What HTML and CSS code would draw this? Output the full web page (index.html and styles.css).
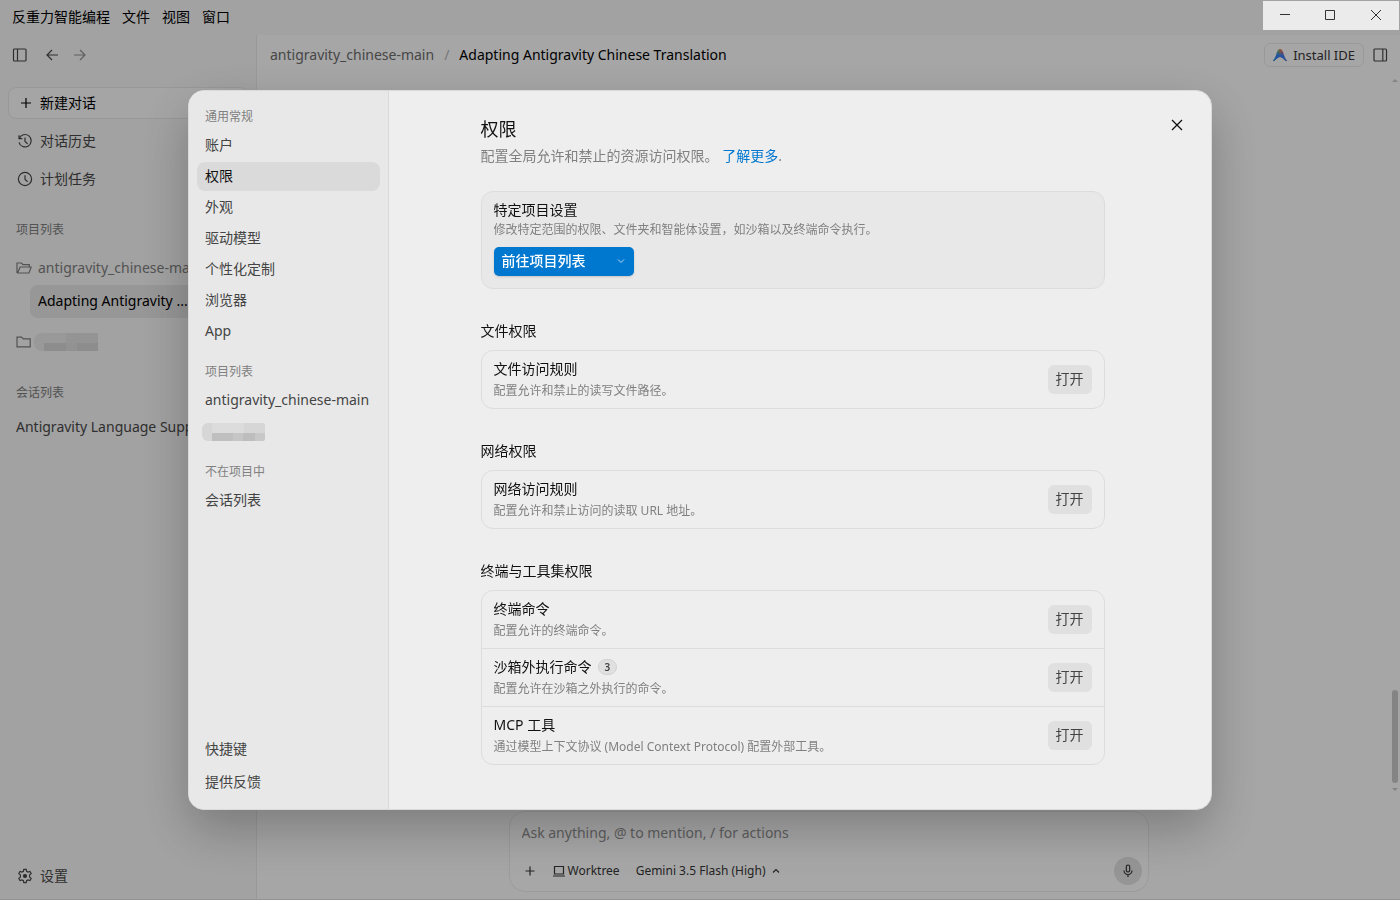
FILE: index.html
```html
<!DOCTYPE html>
<html lang="zh-CN">
<head>
    <meta charset="UTF-8">
    <meta name="viewport" content="width=device-width, initial-scale=1.0">
    <title>反重力智能编程</title>
    <link rel="stylesheet" href="styles.css">
</head>
<body>
    <div class="app">
        <header class="titlebar">
            <nav class="menu">
                <button type="button">反重力智能编程</button>
                <button type="button">文件</button>
                <button type="button">视图</button>
                <button type="button">窗口</button>
            </nav>
            <div class="window-controls">
                <button type="button" aria-label="最小化">
                    <svg width="12" height="12" viewBox="0 0 12 12"><path d="M1 4.5h10"/></svg>
                </button>
                <button type="button" aria-label="最大化">
                    <svg width="12" height="12" viewBox="0 0 12 12"><path d="M1.5 .5h9v9h-9z"/></svg>
                </button>
                <button type="button" aria-label="关闭">
                    <svg width="12" height="12" viewBox="0 0 12 12"><path d="M1 0l10 10M11 0L1 10"/></svg>
                </button>
            </div>
        </header>

        <div class="workspace">
            <aside class="sidebar">
                <div class="sidebar-tools">
                    <button type="button" aria-label="切换侧边栏">
                        <svg class="icon" width="16" height="16" viewBox="0 0 16 16"><rect x="1.5" y="2" width="12.5" height="12" rx="1"/><path d="M5.5 2v12"/></svg>
                    </button>
                    <button type="button" aria-label="后退">
                        <svg class="icon" width="16" height="16" viewBox="0 0 16 16"><path d="M14 8H3M8 3L3 8l5 5"/></svg>
                    </button>
                    <button type="button" class="faded" aria-label="前进">
                        <svg class="icon" width="16" height="16" viewBox="0 0 16 16"><path d="M2 8h11M8 3l5 5-5 5"/></svg>
                    </button>
                </div>

                <button type="button" class="new-chat">
                    <svg class="icon" width="16" height="16" viewBox="0 0 16 16"><path d="M8 3v10M3 8h10"/></svg>
                    <span>新建对话</span>
                </button>
                <button type="button" class="side-link">
                    <svg class="icon" width="16" height="16" viewBox="0 0 16 16"><path d="M2 2.3v3.4h3.4M2.2 5.5A6.2 6.2 0 1 1 2 9.3M8 4.6v3.8l2.6 2.4"/></svg>
                    <span>对话历史</span>
                </button>
                <button type="button" class="side-link">
                    <svg class="icon" width="16" height="16" viewBox="0 0 16 16"><circle cx="8" cy="8" r="6.6"/><path d="M8 4.2v4l2.6 2.6"/></svg>
                    <span>计划任务</span>
                </button>

                <h2 class="side-title">项目列表</h2>
                <div class="project">
                    <svg class="icon" width="16" height="16" viewBox="0 0 16 16"><path d="M1 13V3h4.4l1.6 1.7h6.3V7M1 13h12l2.2-6H4.2L1.6 12.8"/></svg>
                    <span>antigravity_chinese-main</span>
                </div>
                <a href="#" class="conversation active">Adapting Antigravity ...</a>
                <div class="project second">
                    <svg class="icon" width="16" height="16" viewBox="0 0 16 16"><path d="M1 12.8V3.2h4.6l1.6 1.6h7v8z"/></svg>
                    <span class="mosaic dark"></span>
                </div>

                <h2 class="side-title chats">会话列表</h2>
                <a href="#" class="conversation-link">Antigravity Language Support</a>

                <button type="button" class="side-link settings">
                    <svg class="icon" width="16" height="16" viewBox="0 0 16 16"><path d="M6.8 1.3h2.4l.4 2 1.4.8 2-.7 1.2 2.1-1.6 1.4v2.2l1.6 1.4-1.2 2.1-2-.7-1.4.8-.4 2H6.8l-.4-2-1.4-.8-2 .7-1.2-2.1 1.6-1.4V6.9L1.8 5.500 3 3.400l2 .7 1.400-.8z"/><circle cx="8" cy="8" r="1.500" fill="currentColor"/></svg>
                    <span>设置</span>
                </button>
            </aside>

            <main class="main">
                <div class="main-header">
                    <div class="breadcrumb">
                        <a href="#">antigravity_chinese-main</a>
                        <span class="slash">/</span>
                        <span class="current">Adapting Antigravity Chinese Translation</span>
                    </div>
                    <div class="header-actions">
                        <button type="button" class="install">
                            <svg width="16" height="16" viewBox="0 0 16 16">
                                <defs>
                                    <linearGradient id="peak" x1="0" y1="0" x2="1" y2="0">
                                        <stop offset="0.3" stop-color="#4fae6a"/>
                                        <stop offset="0.5" stop-color="#c98a4a"/>
                                        <stop offset="0.65" stop-color="#e0584c"/>
                                    </linearGradient>
                                    <linearGradient id="slope" x1="0" y1="0" x2="0" y2="1">
                                        <stop offset="0.1" stop-color="#3678ea" stop-opacity="0"/>
                                        <stop offset="0.55" stop-color="#3678ea"/>
                                    </linearGradient>
                                </defs>
                                <path id="logo" fill="url(#peak)" d="M8 2c1.700 0 2.400 1.300 3 3.200.9 3 1.900 6.300 3.700 8.100.5.600-.2 1.100-.8.700C11.700 12.700 10.400 10 8 10s-3.700 2.700-5.900 4c-.6.400-1.300-.1-.8-.7C3.100 11.500 4.100 8.200 5 5.200 5.600 3.300 6.300 2 8 2z"/>
                                <path fill="url(#slope)" d="M8 2c1.700 0 2.400 1.300 3 3.200.9 3 1.900 6.300 3.700 8.100.5.600-.2 1.100-.8.700C11.700 12.700 10.400 10 8 10s-3.700 2.700-5.900 4c-.6.400-1.300-.1-.8-.7C3.100 11.500 4.100 8.200 5 5.200 5.600 3.300 6.300 2 8 2z"/>
                            </svg>
                            <span>Install IDE</span>
                        </button>
                        <button type="button" aria-label="切换面板">
                            <svg class="icon" width="16" height="16" viewBox="0 0 16 16"><rect x="2" y="2" width="12.500" height="12" rx="1"/><path d="M10.800 2v12"/></svg>
                        </button>
                    </div>
                </div>

                <div class="chat">
                    <div class="scrollbar">
                        <span class="arrow up"></span>
                        <span class="thumb"></span>
                        <span class="arrow down"></span>
                    </div>
                </div>

                <form class="composer">
                    <input type="text" aria-label="消息" placeholder="Ask anything, @ to mention, / for actions">
                    <div class="composer-bar">
                        <button type="button" aria-label="添加">
                            <svg class="icon" width="16" height="16" viewBox="0 0 16 16"><path d="M8 3.500v9M3.500 8h9"/></svg>
                        </button>
                        <button type="button" class="worktree">
                            <svg class="icon" width="14" height="14" viewBox="0 0 14 14"><path d="M2.500 2.500h9v7.500h-9zM1 12h12"/></svg>
                            <span>Worktree</span>
                        </button>
                        <button type="button" class="model">
                            <span>Gemini 3.5 Flash (High)</span>
                            <svg class="icon" width="10" height="10" viewBox="0 0 10 10"><path d="M2 6.500l3-3 3 3"/></svg>
                        </button>
                        <button type="button" class="mic" aria-label="语音输入">
                            <svg class="icon" width="14" height="14" viewBox="0 0 14 14"><rect x="5.300" y="1" width="3.400" height="7" rx="1.700"/><path d="M3 6.500a4 4 0 0 0 8 0M7 10.500V13"/></svg>
                        </button>
                    </div>
                </form>
            </main>
        </div>
    </div>

    <div class="overlay">
        <div class="dialog" role="dialog" aria-modal="true" aria-labelledby="dialogTitle">
            <nav class="dialog-nav">
                <h3>通用常规</h3>
                <ul>
                    <li><a href="#">账户</a></li>
                    <li><a href="#" class="selected">权限</a></li>
                    <li><a href="#">外观</a></li>
                    <li><a href="#">驱动模型</a></li>
                    <li><a href="#">个性化定制</a></li>
                    <li><a href="#">浏览器</a></li>
                    <li><a href="#">App</a></li>
                </ul>
                <h3>项目列表</h3>
                <ul>
                    <li><a href="#">antigravity_chinese-main</a></li>
                    <li class="hidden-name"><span class="mosaic"></span></li>
                </ul>
                <h3>不在项目中</h3>
                <ul>
                    <li><a href="#">会话列表</a></li>
                </ul>
                <ul class="nav-bottom">
                    <li><a href="#">快捷键</a></li>
                    <li><a href="#">提供反馈</a></li>
                </ul>
            </nav>

            <div class="dialog-body">
                <button type="button" class="close" aria-label="关闭">
                    <svg width="16" height="16" viewBox="0 0 16 16"><path d="M3 3l10 10M13 3L3 13"/></svg>
                </button>
                <div class="content">
                    <h1 id="dialogTitle">权限</h1>
                    <p class="intro">配置全局允许和禁止的资源访问权限。 <a href="#">了解更多</a>.</p>

                    <div class="card project-card">
                        <h4>特定项目设置</h4>
                        <p>修改特定范围的权限、文件夹和智能体设置，如沙箱以及终端命令执行。</p>
                        <button type="button" class="primary">
                            <span>前往项目列表</span>
                            <svg width="10" height="10" viewBox="0 0 10 10"><path d="M2 3.500l3 3 3-3"/></svg>
                        </button>
                    </div>

                    <section>
                        <h2>文件权限</h2>
                        <div class="card">
                            <div class="row">
                                <div class="row-text">
                                    <h4>文件访问规则</h4>
                                    <p>配置允许和禁止的读写文件路径。</p>
                                </div>
                                <button type="button" class="open">打开</button>
                            </div>
                        </div>
                    </section>

                    <section>
                        <h2>网络权限</h2>
                        <div class="card">
                            <div class="row">
                                <div class="row-text">
                                    <h4>网络访问规则</h4>
                                    <p>配置允许和禁止访问的读取 URL 地址。</p>
                                </div>
                                <button type="button" class="open">打开</button>
                            </div>
                        </div>
                    </section>

                    <section>
                        <h2>终端与工具集权限</h2>
                        <div class="card">
                            <div class="row">
                                <div class="row-text">
                                    <h4>终端命令</h4>
                                    <p>配置允许的终端命令。</p>
                                </div>
                                <button type="button" class="open">打开</button>
                            </div>
                            <div class="row">
                                <div class="row-text">
                                    <h4>沙箱外执行命令 <span class="count">3</span></h4>
                                    <p>配置允许在沙箱之外执行的命令。</p>
                                </div>
                                <button type="button" class="open">打开</button>
                            </div>
                            <div class="row">
                                <div class="row-text">
                                    <h4>MCP 工具</h4>
                                    <p>通过模型上下文协议 (Model Context Protocol) 配置外部工具。</p>
                                </div>
                                <button type="button" class="open">打开</button>
                            </div>
                        </div>
                    </section>
                </div>
            </div>
        </div>
    </div>
</body>
</html>
```
FILE: styles.css
```css
* {
    box-sizing: border-box;
}

body {
    margin: 0;
    font-family: "Noto Sans", "Noto Sans CJK SC", sans-serif;
    font-size: 14px;
    line-height: 20px;
    color: #111;
}

h1, h2, h3, h4, p, ul {
    margin: 0;
    padding: 0;
    font-weight: 400;
}

ul {
    list-style: none;
}

a {
    color: inherit;
    text-decoration: none;
}

button {
    display: flex;
    align-items: center;
    padding: 0;
    border: none;
    background: none;
    font: inherit;
    color: inherit;
    cursor: pointer;
}

svg {
    flex: none;
    display: block;
}

.icon {
    fill: none;
    stroke: currentColor;
    stroke-width: 1.2;
}

.app {
    display: flex;
    flex-direction: column;
    height: 100vh;
    background: #e8e8e8;
    border-bottom: 1px solid #d2d2d2;
}

/* title bar */
.titlebar {
    display: flex;
    justify-content: space-between;
    align-items: flex-start;
    height: 35px;
}

.menu {
    display: flex;
    gap: 12px;
    padding: 7px 12px;
    color: #000;
}

/* stays above the overlay */
.window-controls {
    display: flex;
    position: relative;
    z-index: 20;
    margin: 1px 1px 0 0;
    background: #ebebeb;
}

.window-controls button {
    justify-content: center;
    width: 46px;
    height: 29px;
}

.window-controls button:first-child {
    width: 44px;
}

.window-controls svg {
    fill: none;
    stroke: #333;
}

.workspace {
    display: flex;
    flex: 1;
    min-height: 0;
}

/* sidebar */
.sidebar {
    display: flex;
    flex-direction: column;
    width: 256px;
    padding: 0 8px 7px;
    color: #444;
}

.sidebar-tools {
    display: flex;
    align-items: center;
    height: 40px;
    padding-left: 4px;
    margin-bottom: 12px;
}

.sidebar-tools button {
    margin-right: 12px;
}

.sidebar-tools button:first-child {
    margin-right: 16px;
}

.sidebar-tools .faded {
    color: #888;
}

.new-chat {
    gap: 6px;
    height: 32px;
    padding: 0 9px;
    border: 1px solid #dadada;
    border-radius: 8px;
    background: #ededed;
    color: #000;
}

.side-link {
    gap: 7px;
    height: 32px;
    margin-top: 6px;
    padding: 0 9px;
}

.side-title {
    margin-top: 25px;
    padding: 0 8px;
    font-size: 12px;
    color: #777;
}

.project {
    display: flex;
    align-items: center;
    gap: 6px;
    height: 32px;
    margin-top: 12px;
    padding-left: 8px;
    color: #777;
    white-space: nowrap;
    overflow: hidden;
}

.project.second {
    gap: 2px;
    margin-top: 8px;
}

.conversation {
    height: 33px;
    margin: 1px 0 0 22px;
    padding: 6px 8px;
    border-radius: 8px;
    background: #d8d8d8;
    color: #000;
}

.side-title.chats {
    margin-bottom: 14px;
}

.conversation-link {
    padding: 0 8px;
    white-space: nowrap;
    overflow: hidden;
}

.settings {
    margin-top: auto;
}

/* blurred-out names */
.mosaic {
    width: 63px;
    height: 18px;
    border-radius: 6px 2px 2px 6px;
    background:
        linear-gradient(90deg, transparent 10px, #bfbfbf 10px, #bfbfbf 31px, #c6c6c6 31px, #c6c6c6 41px, #bdbdbd 41px, #bdbdbd 53px, #c8c8c8 53px) 0 10px / 100% 8px no-repeat,
        linear-gradient(90deg, #d6d6d6 10px, #dcdcdc 10px, #dcdcdc 42px, #d6d6d6 42px);
}

.mosaic.dark {
    width: 64px;
    border-radius: 8px 0 0 8px;
    background:
        linear-gradient(90deg, transparent 10px, #cbcbcb 10px, #cbcbcb 32px, #d2d2d2 32px, #d2d2d2 43px, #cbcbcb 43px) 0 10px / 100% 8px no-repeat,
        linear-gradient(90deg, #dbdbdb 32px, #d4d4d4 32px);
}

/* main area */
.main {
    display: flex;
    flex: 1;
    flex-direction: column;
    min-width: 0;
    border-left: 1px solid #dcdcdc;
    background: #eee;
}

.main-header {
    display: flex;
    justify-content: space-between;
    align-items: center;
    height: 40px;
    padding: 0 12px 0 13px;
}

.breadcrumb {
    display: flex;
    gap: 10px;
    color: #666;
}

.breadcrumb .slash {
    color: #aaa;
}

.breadcrumb .current {
    color: #000;
}

.header-actions {
    display: flex;
    align-items: center;
    gap: 8px;
    color: #444;
}

.install {
    gap: 5px;
    height: 24px;
    padding: 0 8px 0 7px;
    border: 1px solid #dcdcdc;
    border-radius: 6px;
    font-size: 13px;
    color: #333;
}

.chat {
    display: flex;
    flex: 1;
    justify-content: flex-end;
}

.scrollbar {
    display: flex;
    flex-direction: column;
    align-items: center;
    width: 10px;
    padding: 4px 0;
}

.scrollbar .thumb {
    width: 6px;
    height: 13%;
    margin: auto 0 5px;
    border-radius: 3px;
    background: #bdbdbd;
}

.arrow {
    border: 3px solid transparent;
}

.arrow.up {
    border-top: none;
    border-bottom-color: #bdbdbd;
}

.arrow.down {
    border-bottom: none;
    border-top-color: #bdbdbd;
}

.composer {
    width: calc(100% - 32px);
    max-width: 640px;
    height: 81px;
    margin: 16px auto 7px;
    padding: 8px 6px 5px 12px;
    border: 1px solid #dedede;
    border-radius: 16px;
    background: #f0f0f0;
}

.composer input {
    display: block;
    width: 100%;
    height: 24px;
    padding: 0;
    border: none;
    outline: none;
    background: none;
    font: inherit;
}

.composer input::placeholder {
    color: #888;
    opacity: 1;
}

.composer-bar {
    display: flex;
    align-items: center;
    margin-top: 13px;
    font-size: 12px;
    color: #333;
}

.worktree {
    gap: 2px;
    margin: 0 16px 0 14px;
}

.model {
    gap: 6px;
}

.mic {
    justify-content: center;
    width: 28px;
    height: 28px;
    margin-left: auto;
    border-radius: 50%;
    background: #d6d6d6;
}

/* settings dialog */
.overlay {
    position: fixed;
    inset: 0;
    z-index: 10;
    display: flex;
    justify-content: center;
    align-items: center;
    background: rgba(0, 0, 0, 0.3);
}

.dialog {
    display: flex;
    width: 90%;
    max-width: 1024px;
    height: 80%;
    border: 1px solid #dadada;
    border-radius: 16px;
    background: #eee;
    box-shadow: 0 20px 50px rgba(0, 0, 0, 0.25);
    overflow: hidden;
}

.dialog-nav {
    display: flex;
    flex-direction: column;
    width: 200px;
    padding: 12px 8px;
    border-right: 1px solid #dadada;
    background: #e8e8e8;
    color: #444;
}

.dialog-nav h3 {
    padding: 4px 8px;
    font-size: 12px;
    color: #808080;
}

.dialog-nav ul {
    display: flex;
    flex-direction: column;
    gap: 2px;
    margin-bottom: 12px;
}

.dialog-nav a {
    display: block;
    height: 29px;
    padding: 4px 8px;
    border-radius: 8px;
    white-space: nowrap;
}

.dialog-nav .selected {
    background: #dadada;
    color: #111;
}

.dialog-nav .hidden-name {
    display: flex;
    align-items: center;
    height: 29px;
    padding-left: 5px;
}

.dialog-nav .nav-bottom {
    gap: 4px;
    margin: auto 0 0;
}

.dialog-body {
    position: relative;
    flex: 1;
    padding: 24px 31px 24px 16px;
    overflow: hidden;
}

.close {
    position: absolute;
    top: 26px;
    right: 26px;
}

.close svg {
    fill: none;
    stroke: #111;
    stroke-width: 1.3;
}

.content {
    max-width: 624px;
    margin: 0 auto;
}

.content h1 {
    font-size: 18px;
    line-height: 28px;
}

.intro {
    margin: 3px 0 25px;
    color: #808080;
}

.intro a {
    color: #0078d0;
}

.card {
    border: 1px solid #dcdcdc;
    border-radius: 12px;
}

.card p {
    font-size: 12px;
    color: #808080;
}

.project-card {
    padding: 8px 12px 12px;
    background: #e8e8e8;
}

.primary {
    justify-content: space-between;
    width: 140px;
    height: 29px;
    margin-top: 7px;
    padding: 0 8px 1px;
    border-radius: 5px;
    background: #0078d0;
    box-shadow: 0 1px 2px rgba(0, 0, 0, 0.15);
    color: #fff;
    font-weight: 500;
}

.primary svg {
    fill: none;
    stroke: #b8daf2;
}

.content section {
    margin-top: 32px;
}

.content h2 {
    margin-bottom: 9px;
    font-size: 14px;
}

.row {
    display: flex;
    justify-content: space-between;
    align-items: center;
    height: 57px;
    padding: 0 12px;
}

.row + .row {
    height: 58px;
    border-top: 1px solid #dcdcdc;
}

.row h4 {
    display: flex;
    align-items: center;
    gap: 6px;
    margin-bottom: 2px;
}

.count {
    padding: 0 6px;
    border: 1px solid #d2d2d2;
    border-radius: 8px;
    background: #e0e0e0;
    font-size: 10px;
    font-weight: 600;
    line-height: 14px;
    color: #444;
}

.open {
    height: 29px;
    padding: 0 8px 1px;
    border-radius: 6px;
    background: #e0e0e0;
    color: #444;
}
```
